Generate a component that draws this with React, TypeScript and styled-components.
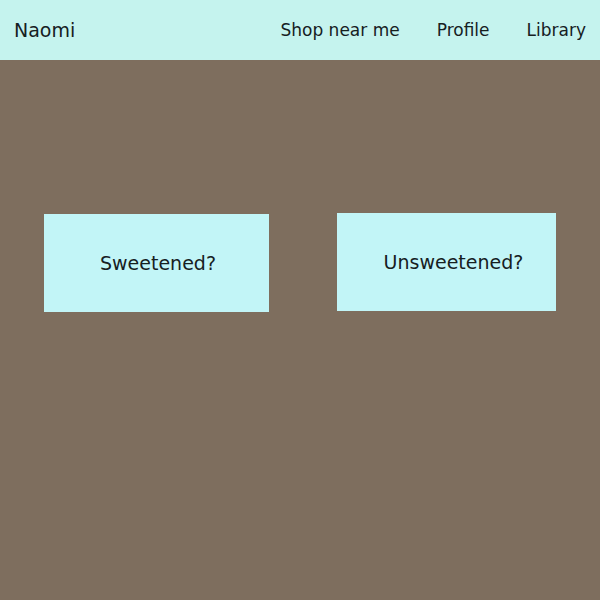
import React from "react";
import styled, { createGlobalStyle } from "styled-components";

const Global = createGlobalStyle`
  html, body { margin: 0; padding: 0; }
  body {
    background: #7e6e5e;
    font-family: "DejaVu Sans", "Liberation Sans", sans-serif;
    color: #16201f;
  }
`;

const Page = styled.div`
  width: 600px;
  height: 600px;
  display: flex;
  flex-direction: column;
  background: #7e6e5e;
`;

const Header = styled.header`
  height: 60px;
  background: #c5f3ee;
  display: flex;
  align-items: center;
  justify-content: space-between;
  padding: 0 14px;
  box-sizing: border-box;
`;

const Brand = styled.div`
  font-size: 19px;
`;

const Nav = styled.nav`
  display: flex;
  gap: 37px;
`;

const NavLink = styled.a`
  font-size: 17px;
  color: #16201f;
  text-decoration: none;
`;

const Main = styled.main`
  display: flex;
  align-items: flex-start;
  padding: 153px 0 0 44px;
  gap: 68px;
`;

const Choice = styled.button<{ $w: number; $shift: number; $pad: number }>`
  width: ${(p) => p.$w}px;
  height: 98px;
  margin-top: ${(p) => p.$shift}px;
  border: none;
  background: #c2f5f7;
  font-family: inherit;
  font-size: 19px;
  color: #16201f;
  display: flex;
  align-items: center;
  justify-content: center;
  padding: 0 0 0 ${(p) => p.$pad}px;
  box-sizing: border-box;
`;

export default function App() {
  return (
    <Page>
      <Global />
      <Header>
        <Brand>Naomi</Brand>
        <Nav>
          <NavLink>Shop near me</NavLink>
          <NavLink>Profile</NavLink>
          <NavLink>Library</NavLink>
        </Nav>
      </Header>
      <Main>
        <Choice $w={225} $shift={1} $pad={3}>Sweetened?</Choice>
        <Choice $w={219} $shift={0} $pad={14}>Unsweetened?</Choice>
      </Main>
    </Page>
  );
}
